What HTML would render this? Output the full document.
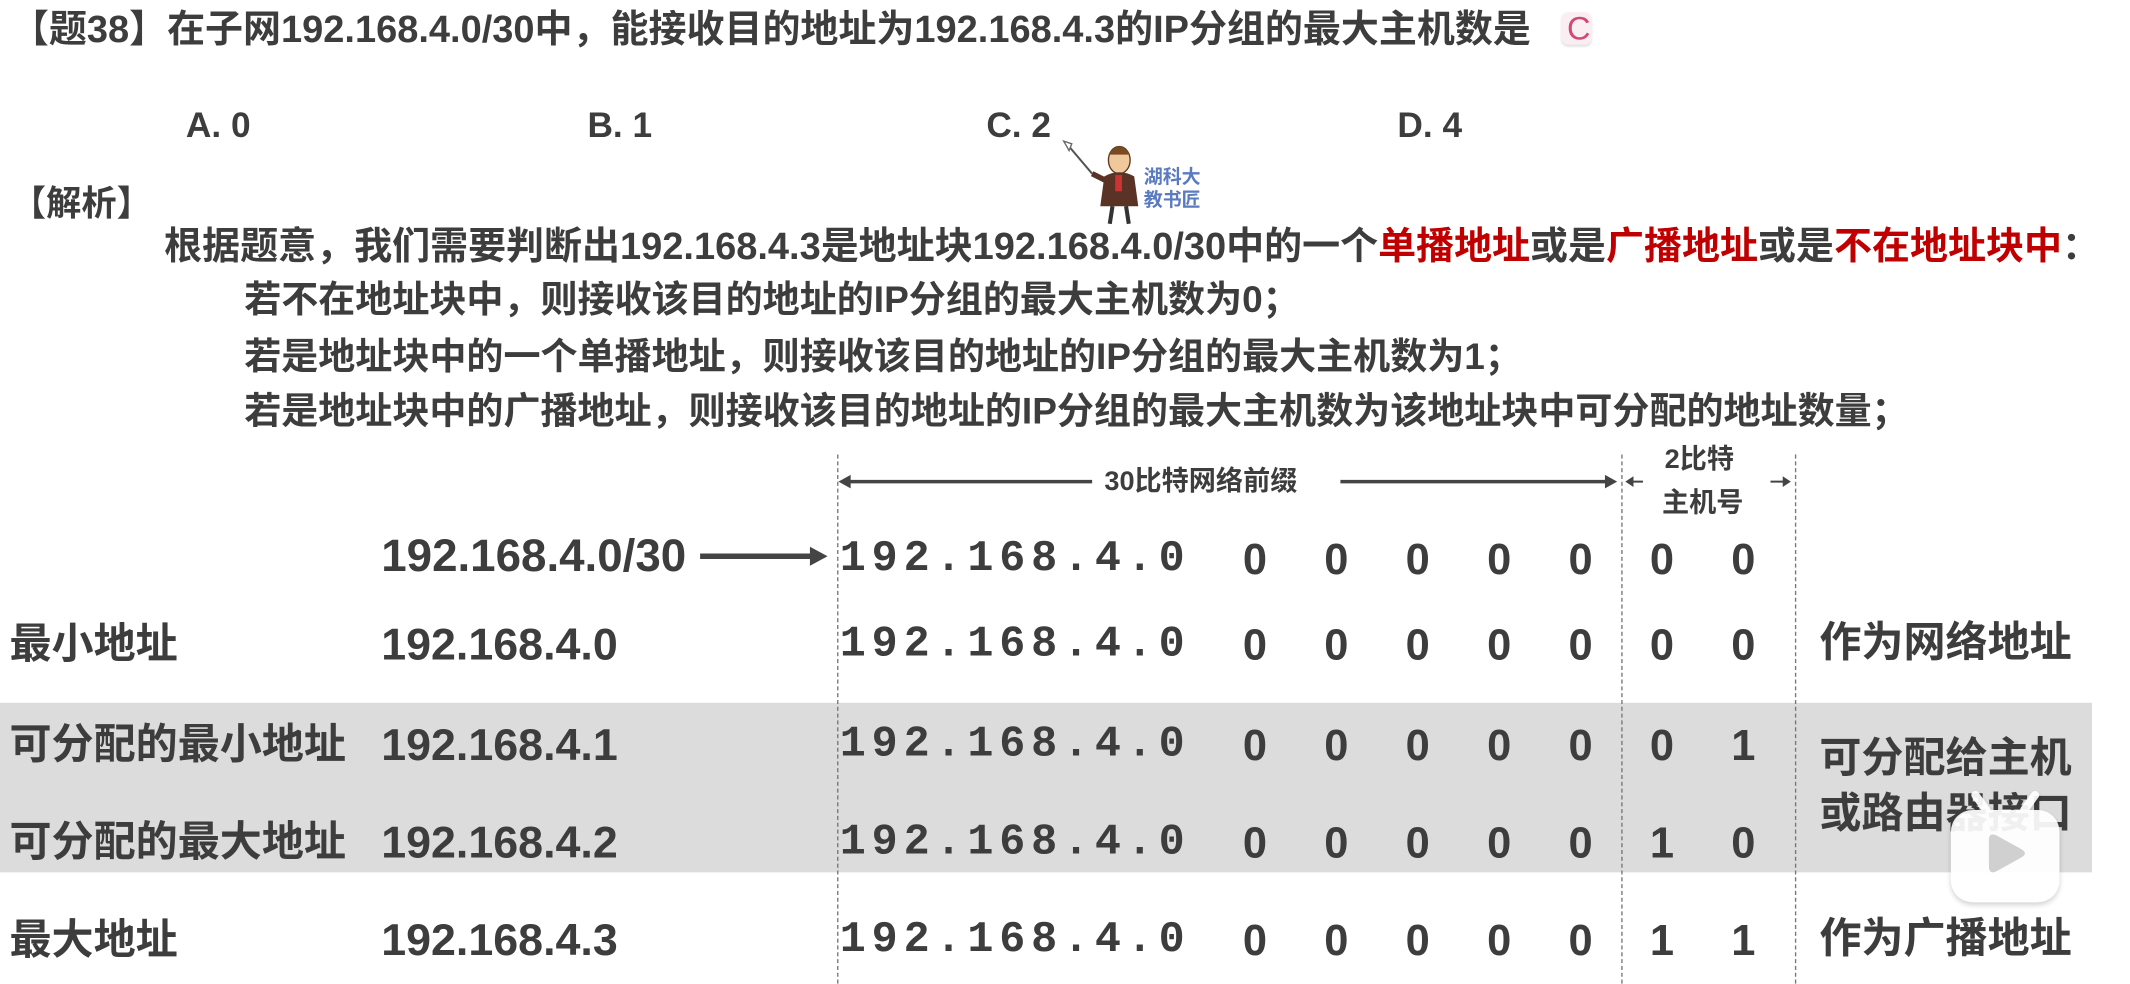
<!DOCTYPE html>
<html><head><meta charset="utf-8"><style>
html,body{margin:0;padding:0;background:#fff;}
body{width:2130px;height:977px;overflow:hidden;position:relative;}
#w{position:absolute;left:0;top:0;width:1570px;height:720px;transform:scale(1.3567);transform-origin:0 0;}
.t{position:absolute;white-space:nowrap;font-family:"Liberation Sans","Noto Sans CJK SC",sans-serif;font-weight:bold;color:#3d3d3d;line-height:1;}
.r{color:#c00000;}
.m{font-family:"Liberation Mono",monospace;font-size:32px;letter-spacing:4.3px;}
.z{position:absolute;width:30px;text-align:center;font-family:"Liberation Sans",sans-serif;font-weight:bold;font-size:32px;color:#3d3d3d;line-height:1;}
.dash{position:absolute;top:335px;height:390px;width:0;border-left:1.2px dashed #777;}
.band{position:absolute;left:0;top:518px;width:1542px;height:125px;background:#dcdcdc;}
</style></head><body><div id="w">
<div class="band"></div>
<div class="t" style="left:8px;top:8px;font-size:28px;">【题38】在子网192.168.4.0/30中，能接收目的地址为192.168.4.3的IP分组的最大主机数是</div>
<div style="position:absolute;left:1151px;top:9px;width:22px;height:24px;border-radius:5px;background:#fbeef2;box-shadow:0 1px 2px #ddd;"></div>
<div class="t" style="left:1155px;top:10px;font-size:24px;color:#d04a74;font-weight:normal;">C</div>

<div class="t" style="left:137px;top:79px;font-size:26px;">A. 0</div>
<div class="t" style="left:433px;top:79px;font-size:26px;">B. 1</div>
<div class="t" style="left:727px;top:79px;font-size:26px;">C. 2</div>
<div class="t" style="left:1030px;top:79px;font-size:26px;">D. 4</div>

<div class="t" style="left:8px;top:137px;font-size:26px;">【解析】</div>
<div class="t" style="left:121px;top:168px;font-size:28px;">根据题意，我们需要判断出192.168.4.3是地址块192.168.4.0/30中的一个<span class="r">单播地址</span>或是<span class="r">广播地址</span>或是<span class="r">不在地址块中</span>：</div>
<div class="t" style="left:180px;top:207px;font-size:27.3px;">若不在地址块中，则接收该目的地址的IP分组的最大主机数为0；</div>
<div class="t" style="left:180px;top:249px;font-size:27.3px;">若是地址块中的一个单播地址，则接收该目的地址的IP分组的最大主机数为1；</div>
<div class="t" style="left:180px;top:289px;font-size:27.3px;">若是地址块中的广播地址，则接收该目的地址的IP分组的最大主机数为该地址块中可分配的地址数量；</div>

<!-- teacher -->
<svg style="position:absolute;left:780px;top:100px" width="120" height="70" viewBox="0 0 120 70">
<line x1="8" y1="8" x2="25" y2="28" stroke="#555" stroke-width="1.5"/>
<path d="M4 4 l6 2 l-2 5z" fill="#fff" stroke="#666" stroke-width="1"/>
<ellipse cx="45" cy="18" rx="8" ry="10" fill="#f1c79c" stroke="#5a3a20" stroke-width="1"/>
<path d="M37 14 q8 -12 16 0" fill="#7a4a20"/>
<path d="M34 30 q11 -6 22 0 l3 22 h-28z" fill="#5a3326"/>
<path d="M25 28 l12 6" stroke="#5a3326" stroke-width="4"/>
<rect x="42" y="29" width="5" height="12" fill="#c33"/>
<line x1="40" y1="52" x2="38" y2="65" stroke="#333" stroke-width="3"/>
<line x1="50" y1="52" x2="52" y2="65" stroke="#333" stroke-width="3"/>
</svg>
<div class="t" style="left:843px;top:122px;font-size:14px;color:#5b7bc0;line-height:17px;">湖科大<br>教书匠</div>

<div class="dash" style="left:617px"></div>
<div class="dash" style="left:1195px"></div>
<div class="dash" style="left:1323px"></div>

<svg style="position:absolute;left:615px;top:345px" width="715" height="20">
<g stroke="#444" stroke-width="2.5" fill="#444">
<line x1="8" y1="10" x2="190" y2="10"/><path d="M3 10 l9 -5 v10z" stroke="none"/>
<line x1="373" y1="10" x2="570" y2="10"/><path d="M577 10 l-9 -5 v10z" stroke="none"/>
<line x1="588" y1="10" x2="596" y2="10" stroke-width="1.5"/><path d="M583 10 l6 -4 v8z" stroke="none"/>
<line x1="690" y1="10" x2="700" y2="10" stroke-width="1.5"/><path d="M705 10 l-6 -4 v8z" stroke="none"/>
</g></svg>
<div class="t" style="left:814px;top:345px;font-size:20px;">30比特网络前缀</div>
<div class="t" style="left:1227px;top:329px;font-size:20px;">2比特</div>
<div class="t" style="left:1225px;top:361px;font-size:20px;">主机号</div>

<div class="t" style="left:281px;top:394px;font-size:33.7px;">192.168.4.0/30</div>
<svg style="position:absolute;left:516px;top:400px" width="96" height="20"><line x1="0" y1="10" x2="84" y2="10" stroke="#444" stroke-width="4"/><path d="M94 10 l-13 -7 v14z" fill="#444"/></svg>

<div class="t" style="left:7px;top:459px;font-size:31px;">最小地址</div>
<div class="t" style="left:281px;top:458px;font-size:33px;">192.168.4.0</div>
<div class="t" style="left:1341px;top:458px;font-size:31px;">作为网络地址</div>

<div class="t" style="left:7px;top:533px;font-size:31px;">可分配的最小地址</div>
<div class="t" style="left:281px;top:532px;font-size:33px;">192.168.4.1</div>
<div class="t" style="left:1341px;top:543px;font-size:31px;">可分配给主机</div>
<div class="t" style="left:1341px;top:584px;font-size:31px;">或路由器接口</div>

<div class="t" style="left:7px;top:605px;font-size:31px;">可分配的最大地址</div>
<div class="t" style="left:281px;top:604px;font-size:33px;">192.168.4.2</div>

<div class="t" style="left:7px;top:677px;font-size:31px;">最大地址</div>
<div class="t" style="left:281px;top:676px;font-size:33px;">192.168.4.3</div>
<div class="t" style="left:1341px;top:676px;font-size:31px;">作为广播地址</div>

<div class="t m" style="left:619px;top:396px;">192.168.4.0</div>
<div class="t m" style="left:619px;top:459px;">192.168.4.0</div>
<div class="t m" style="left:619px;top:533px;">192.168.4.0</div>
<div class="t m" style="left:619px;top:605px;">192.168.4.0</div>
<div class="t m" style="left:619px;top:677px;">192.168.4.0</div>

<div class="z" style="left:910px;top:396px">0</div><div class="z" style="left:970px;top:396px">0</div><div class="z" style="left:1030px;top:396px">0</div><div class="z" style="left:1090px;top:396px">0</div><div class="z" style="left:1150px;top:396px">0</div><div class="z" style="left:1210px;top:396px">0</div><div class="z" style="left:1270px;top:396px">0</div>
<div class="z" style="left:910px;top:459px">0</div><div class="z" style="left:970px;top:459px">0</div><div class="z" style="left:1030px;top:459px">0</div><div class="z" style="left:1090px;top:459px">0</div><div class="z" style="left:1150px;top:459px">0</div><div class="z" style="left:1210px;top:459px">0</div><div class="z" style="left:1270px;top:459px">0</div>
<div class="z" style="left:910px;top:533px">0</div><div class="z" style="left:970px;top:533px">0</div><div class="z" style="left:1030px;top:533px">0</div><div class="z" style="left:1090px;top:533px">0</div><div class="z" style="left:1150px;top:533px">0</div><div class="z" style="left:1210px;top:533px">0</div><div class="z" style="left:1270px;top:533px">1</div>
<div class="z" style="left:910px;top:605px">0</div><div class="z" style="left:970px;top:605px">0</div><div class="z" style="left:1030px;top:605px">0</div><div class="z" style="left:1090px;top:605px">0</div><div class="z" style="left:1150px;top:605px">0</div><div class="z" style="left:1210px;top:605px">1</div><div class="z" style="left:1270px;top:605px">0</div>
<div class="z" style="left:910px;top:677px">0</div><div class="z" style="left:970px;top:677px">0</div><div class="z" style="left:1030px;top:677px">0</div><div class="z" style="left:1090px;top:677px">0</div><div class="z" style="left:1150px;top:677px">0</div><div class="z" style="left:1210px;top:677px">1</div><div class="z" style="left:1270px;top:677px">1</div>

<svg style="position:absolute;left:1432px;top:580px" width="92" height="90" viewBox="-4 -3 92 90">
<defs><filter id="s" x="-20%" y="-20%" width="140%" height="140%"><feDropShadow dx="0" dy="2" stdDeviation="2" flood-color="#000" flood-opacity="0.2"/></filter></defs>
<g opacity="0.92" filter="url(#s)">
<line x1="28" y1="14" x2="20" y2="3" stroke="#fff" stroke-width="6" stroke-linecap="round"/>
<line x1="56" y1="14" x2="64" y2="3" stroke="#fff" stroke-width="6" stroke-linecap="round"/>
<rect x="2" y="14" width="80" height="68" rx="16" fill="#fff"/>
</g>
<path d="M30 36 q0 -6 6 -3 l18 10 q5 3 0 6 l-18 10 q-6 3 -6 -3z" fill="#d0d0d0"/>
</svg>
</div></body></html>
